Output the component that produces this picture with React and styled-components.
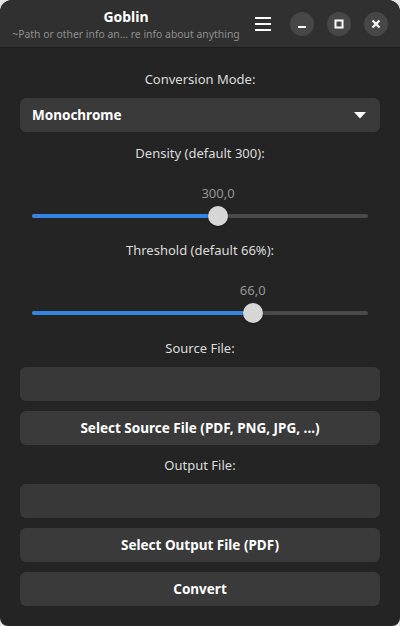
import styled, { createGlobalStyle } from "styled-components";

const GlobalStyle = createGlobalStyle`
	html, body {
		margin: 0;
		padding: 0;
		background: #e6e6e6;
	}
	body {
		font-family: "Noto Sans", "Open Sans", sans-serif;
	}
`;

const Window = styled.div`
	width: 400px;
	height: 626px;
	background: #242424;
	border-radius: 12px 12px 8px 8px;
	overflow: hidden;
	display: flex;
	flex-direction: column;
`;

const HeaderBar = styled.header`
	height: 47px;
	background: #303030;
	border-bottom: 1px solid #1c1c1c;
	display: flex;
	align-items: center;
	padding: 0 12px 0 0;
`;

const TitleBox = styled.div`
	width: 252px;
	display: flex;
	flex-direction: column;
	align-items: center;
	padding-top: 2px;
`;

const Title = styled.div`
	color: #ffffff;
	font-weight: 700;
	font-size: 14px;
	line-height: 18px;
`;

const Subtitle = styled.div`
	color: #8f8f8f;
	font-size: 10.4px;
	line-height: 16px;
	white-space: nowrap;
`;

const HeaderActions = styled.div`
	flex: 1;
	display: flex;
	align-items: center;
	gap: 13px;
`;

const MenuButton = styled.button`
	width: 24px;
	height: 24px;
	padding: 0;
	border: 0;
	background: transparent;
	display: flex;
	align-items: center;
	justify-content: center;
	margin-left: -1px;
	margin-right: 2px;
`;

const RoundButton = styled.button`
	width: 24px;
	height: 24px;
	border-radius: 50%;
	border: 0;
	padding: 0;
	background: #474747;
	display: flex;
	align-items: center;
	justify-content: center;
`;

const Content = styled.main`
	flex: 1;
	display: flex;
	flex-direction: column;
	padding: 22px 20px 0;
`;

const Label = styled.div`
	color: #dcdcdc;
	font-size: 13px;
	line-height: 18px;
	text-align: center;
	margin-top: ${(p) => p.$top || 0}px;
`;

const Dropdown = styled.div`
	margin-top: 10px;
	height: 34px;
	border-radius: 6px;
	background: #3a3a3a;
	display: flex;
	align-items: center;
	justify-content: space-between;
	padding: 0 14px 0 12px;
	color: #ffffff;
	font-weight: 700;
	font-size: 13.5px;
`;

const SliderBlock = styled.div`
	position: relative;
	height: 70px;
	margin: 0 12px;
`;

const Track = styled.div`
	position: absolute;
	left: 0;
	right: 0;
	top: 52px;
	height: 4px;
	border-radius: 2px;
	background: #4a4a4a;
`;

const Fill = styled.div`
	height: 100%;
	border-radius: 2px;
	background: #3584e4;
`;

const Thumb = styled.div`
	position: absolute;
	top: 44px;
	width: 20px;
	height: 20px;
	margin-left: -10px;
	border-radius: 50%;
	background: #d6d6d6;
	box-shadow: 0 1px 2px rgba(0, 0, 0, 0.4);
`;

const Value = styled.div`
	position: absolute;
	top: 22px;
	transform: translateX(-50%);
	color: #959595;
	font-size: 13px;
	line-height: 18px;
`;

const Field = styled.div`
	margin-top: 10px;
	height: 34px;
	border-radius: 6px;
	background: #383838;
`;

const Button = styled.button`
	margin-top: 10px;
	height: 34px;
	border: 0;
	border-radius: 6px;
	background: #3a3a3a;
	color: #ffffff;
	font-family: inherit;
	font-weight: 700;
	font-size: 13.5px;
`;

const Slider = ({ fraction, value }) => {
	// thumb travels within the track, 10px in from each end
	const x = `calc(10px + (100% - 20px) * ${fraction})`;
	return (
		<SliderBlock>
			<Value style={{ left: x }}>{value}</Value>
			<Track>
				<Fill style={{ width: x }} />
			</Track>
			<Thumb style={{ left: x }} />
		</SliderBlock>
	);
};

const App = () => {
	return (
		<>
			<GlobalStyle />
			<Window>
				<HeaderBar>
					<TitleBox>
						<Title>Goblin</Title>
						<Subtitle>~Path or other info an... re info about anything</Subtitle>
					</TitleBox>
					<HeaderActions>
						<MenuButton>
							<svg width="16" height="14" viewBox="0 0 16 14">
								<rect x="0" y="0" width="16" height="2" fill="#fff" />
								<rect x="0" y="6" width="16" height="2" fill="#fff" />
								<rect x="0" y="12" width="16" height="2" fill="#fff" />
							</svg>
						</MenuButton>
						<RoundButton>
							<svg width="10" height="10" viewBox="0 0 10 10">
								<rect x="1" y="7" width="8" height="2" fill="#fff" />
							</svg>
						</RoundButton>
						<RoundButton>
							<svg width="10" height="10" viewBox="0 0 10 10">
								<rect x="1.5" y="1.5" width="7" height="7" fill="none" stroke="#fff" strokeWidth="2" />
							</svg>
						</RoundButton>
						<RoundButton>
							<svg width="10" height="10" viewBox="0 0 10 10">
								<path d="M1.5 1.5 L8.5 8.5 M8.5 1.5 L1.5 8.5" stroke="#fff" strokeWidth="2" />
							</svg>
						</RoundButton>
					</HeaderActions>
				</HeaderBar>
				<Content>
					<Label>Conversion Mode:</Label>
					<Dropdown>
						<span>Monochrome</span>
						<svg width="12" height="7" viewBox="0 0 12 7">
							<path d="M0 0 L12 0 L6 6.5 Z" fill="#fff" />
						</svg>
					</Dropdown>
					<Label $top={12}>Density (default 300):</Label>
					<Slider fraction={0.557} value="300,0" />
					<Label $top={9}>Threshold (default 66%):</Label>
					<Slider fraction={0.667} value="66,0" />
					<Label $top={10}>Source File:</Label>
					<Field />
					<Button>Select Source File (PDF, PNG, JPG, ...)</Button>
					<Label $top={11}>Output File:</Label>
					<Field />
					<Button>Select Output File (PDF)</Button>
					<Button>Convert</Button>
				</Content>
			</Window>
		</>
	);
};

export default App;
